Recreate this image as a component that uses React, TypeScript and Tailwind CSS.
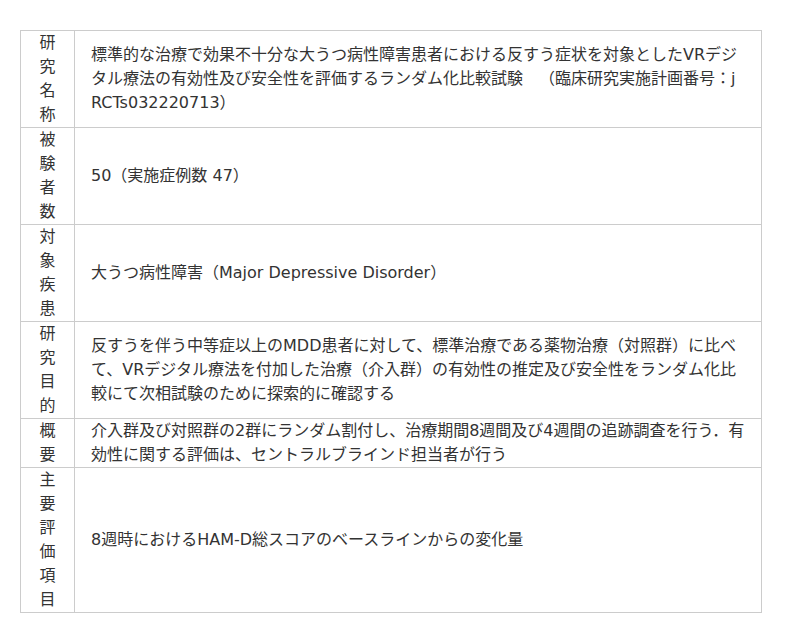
import type { ReactNode } from 'react';

const rows: { label: string; body: ReactNode }[] = [
  {
    label: '研究名称',
    body: (
      <>
        標準的な治療で効果不十分な大うつ病性障害患者における反すう症状を対象としたVRデジ
        <br />
        タル療法の有効性及び安全性を評価するランダム化比較試験
        <span className="inline-block w-4" />
        （臨床研究実施計画番号：j
        <br />
        RCTs032220713）
      </>
    ),
  },
  { label: '被験者数', body: '50（実施症例数 47）' },
  { label: '対象疾患', body: '大うつ病性障害（Major Depressive Disorder）' },
  {
    label: '研究目的',
    body: '反すうを伴う中等症以上のMDD患者に対して、標準治療である薬物治療（対照群）に比べて、VRデジタル療法を付加した治療（介入群）の有効性の推定及び安全性をランダム化比較にて次相試験のために探索的に確認する',
  },
  {
    label: '概要',
    body: '介入群及び対照群の2群にランダム割付し、治療期間8週間及び4週間の追跡調査を行う．有効性に関する評価は、セントラルブラインド担当者が行う',
  },
  { label: '主要評価項目', body: '8週時におけるHAM-D総スコアのベースラインからの変化量' },
];

export default function App() {
  return (
    <div
      className="bg-white min-h-screen pt-[30px] pl-[20px] text-[#333]"
      style={{ fontFamily: '"DejaVu Sans", "Noto Sans CJK JP", sans-serif' }}
    >
      <table className="w-[742px] border-collapse table-fixed text-[16px] leading-[24px]">
        <colgroup>
          <col className="w-[54px]" />
          <col />
        </colgroup>
        <tbody>
          {rows.map((r) => (
            <tr key={r.label}>
              <th className="border border-[#cccccc] p-0 font-normal align-middle">
                <div className="w-4 mx-auto break-all text-center">{r.label}</div>
              </th>
              <td className="border border-[#cccccc] px-4 py-0 align-middle break-all">{r.body}</td>
            </tr>
          ))}
        </tbody>
      </table>
    </div>
  );
}
